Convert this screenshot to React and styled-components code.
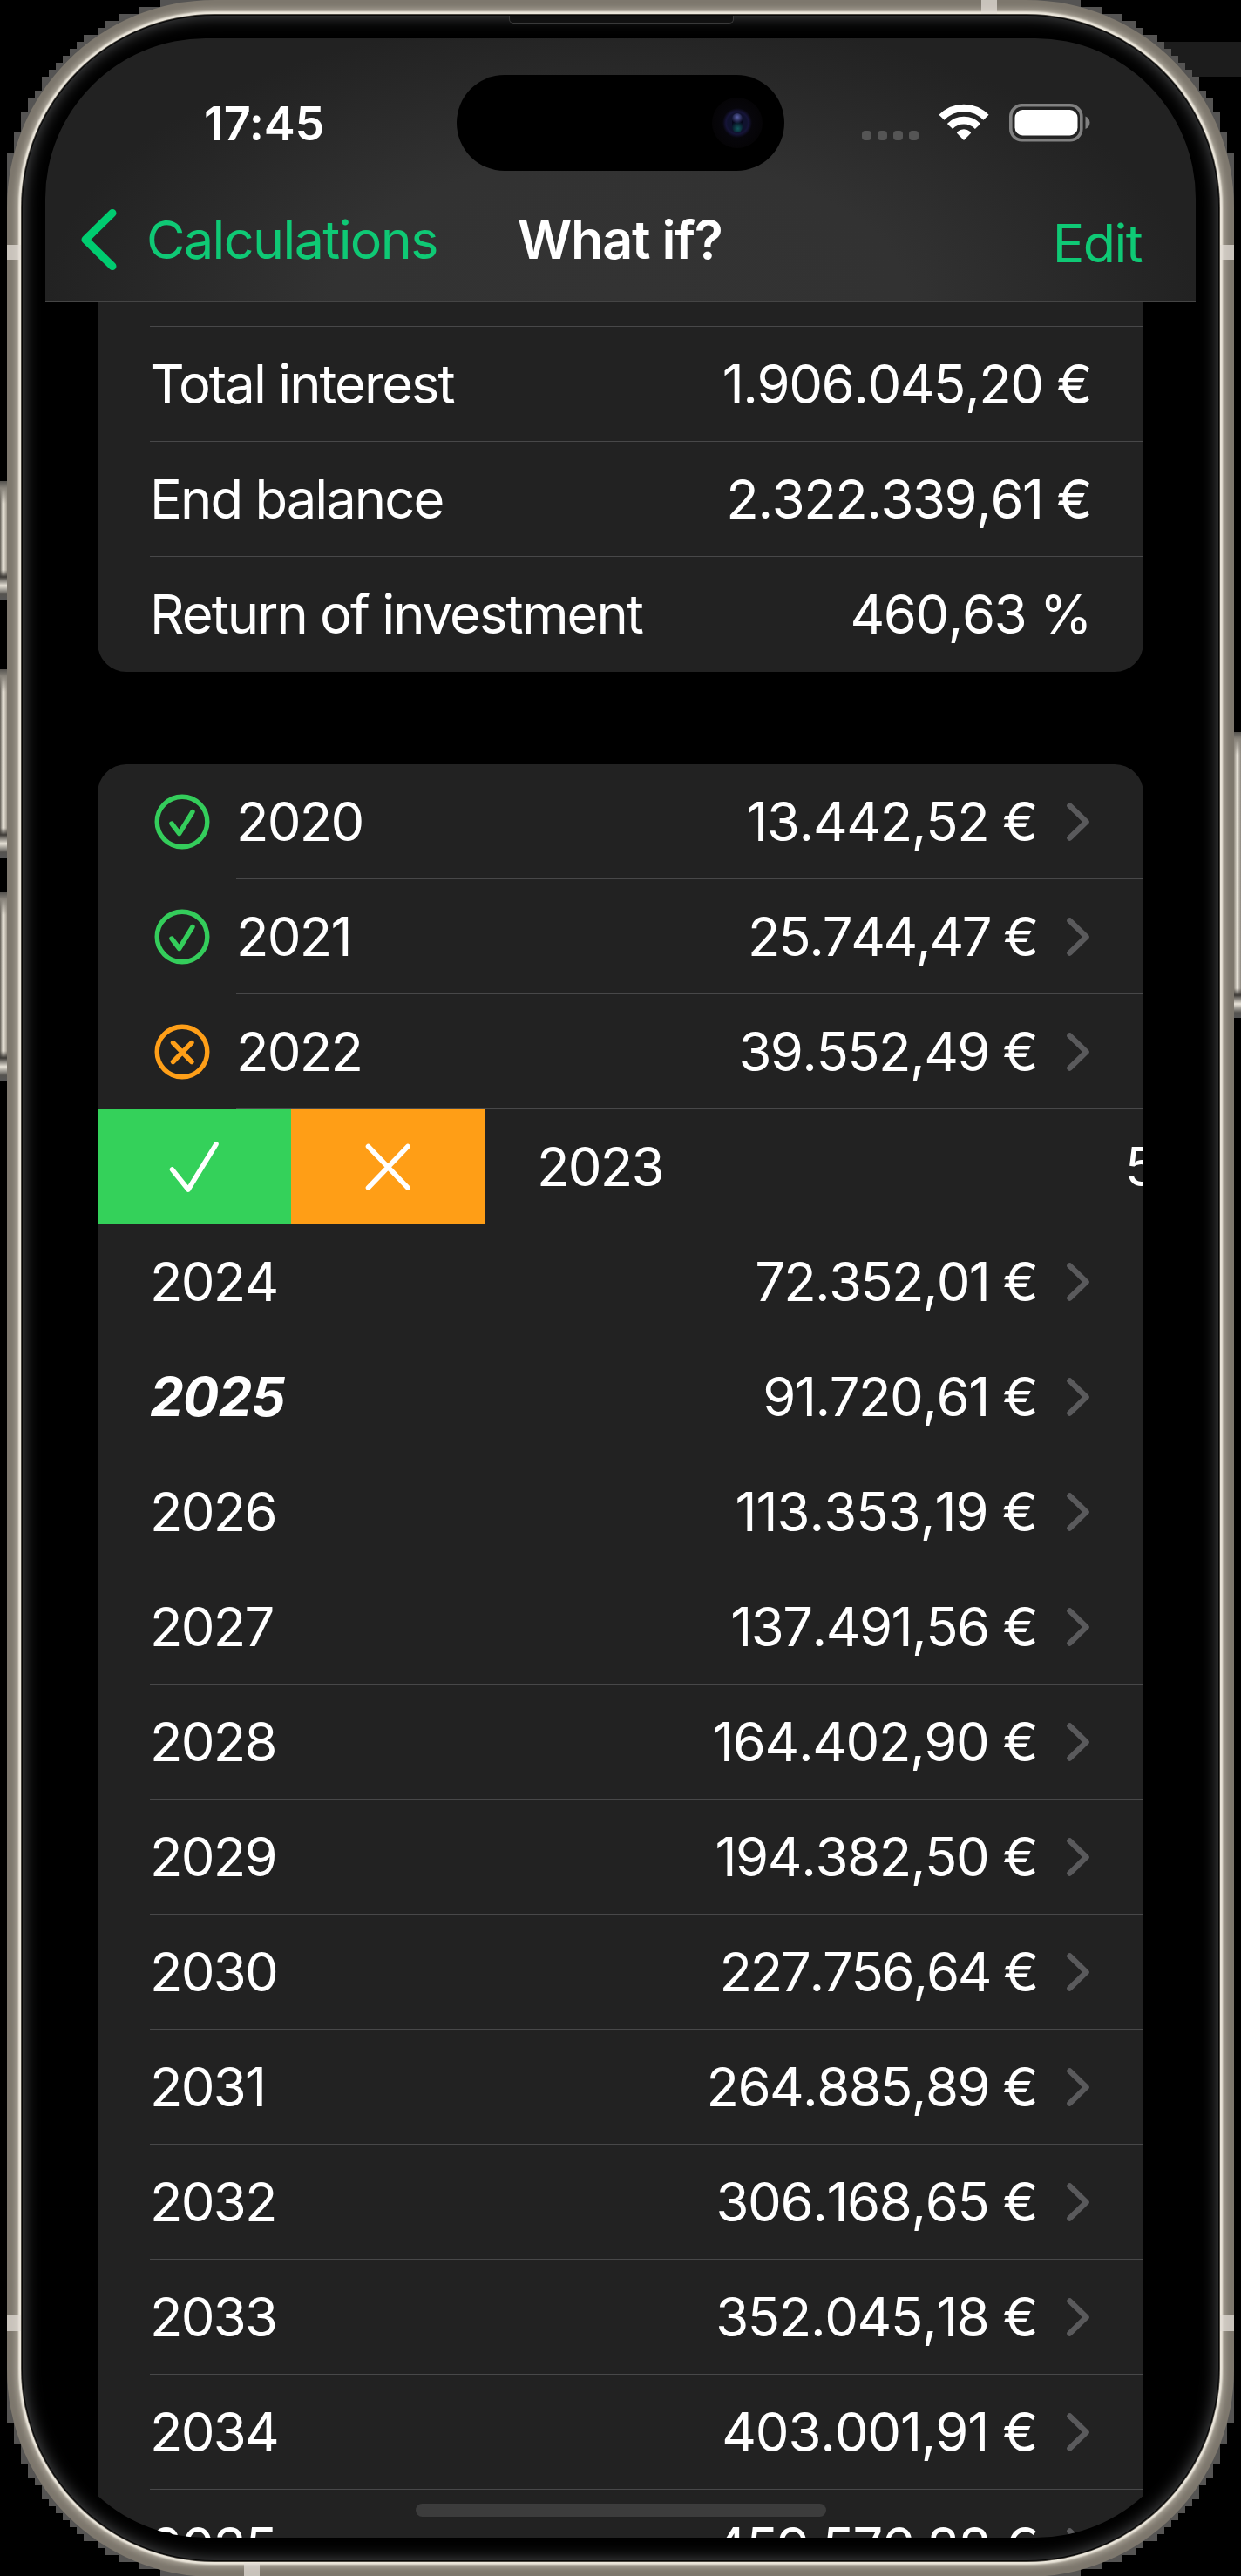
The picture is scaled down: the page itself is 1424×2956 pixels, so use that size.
import React from "react";
import styled, { createGlobalStyle, css } from "styled-components";

const Global = createGlobalStyle`
  html, body { margin: 0; padding: 0; background: #000; }
  * { box-sizing: border-box; }
`;

const Page = styled.main`
  position: relative;
  width: 1424px;
  height: 2956px;
  overflow: hidden;
  background: #000;
  font-family: Inter, "Liberation Sans", sans-serif;
  color: #fff;
`;

const Strip = styled.div`
  position: absolute;
  top: 48px;
  right: 0;
  width: 110px;
  height: 40px;
  background: #1c1c1c;
`;

const Edge = styled.svg`
  position: absolute;
  inset: 0;
  width: 1424px;
  height: 2956px;
`;

const SideButton = styled.span`
  position: absolute;
  width: 8px;
  background: linear-gradient(
      180deg,
      #55534f 0,
      #8a857c 8px,
      transparent 26px,
      transparent calc(100% - 34px),
      #3d3a36 calc(100% - 26px),
      #e8e3d8 calc(100% - 16px),
      #55534f calc(100% - 6px),
      #555 100%
    ),
    ${(p) =>
      p.$right
        ? "linear-gradient(90deg, #8f897e, #e6e1d7 45%, #8a857c)"
        : "linear-gradient(90deg, #5d5850, #f1ece1 45%, #a39c90)"};
  ${(p) => (p.$right ? "right: 0;" : "left: 0;")}
  top: ${(p) => p.$top}px;
  height: ${(p) => p.$height}px;
`;

const Frame = styled.div`
  position: relative;
  margin: 0 8px;
  height: 2957px;
  padding: 17px;
  border-radius: 238px;
  background: #7d776d;
  overflow: hidden;
`;

const Band = styled.span`
  position: absolute;
  background: rgba(226, 220, 214, 0.75);
  left: ${(p) => p.$x}px;
  top: ${(p) => p.$y}px;
  width: ${(p) => p.$w}px;
  height: ${(p) => p.$h}px;
`;

const Bezel = styled.div`
  position: relative;
  height: 2922px;
  padding: 27px;
  border-radius: 221px;
  background: #000;
  box-shadow: inset 0 0 0 1px #050505, inset 0 0 20px #5a5b5d,
    0 0 0 1px #4b4740, 0 0 2px 4px #ece7dc, 0 0 6px 7px #aaa498;
`;

const Speaker = styled.span`
  position: absolute;
  top: 1px;
  left: 559px;
  width: 258px;
  height: 9px;
  background: #111;
  border: 1px solid #3a3a3a;
  border-top: 0;
  border-radius: 0 0 5px 5px;
`;

const Screen = styled.div`
  position: relative;
  display: flex;
  flex-direction: column;
  width: 1320px;
  height: 2868px;
  border-radius: 184px;
  overflow: hidden;
  background: #000;
`;

const Header = styled.header`
  flex: none;
  height: 302px;
  border-bottom: 1px solid #454545;
  background: radial-gradient(
    ellipse 660px 330px at 50% 100%,
    #333 0%,
    #323232 50%,
    #222 100%
  );
  display: flex;
  flex-direction: column;
`;

const StatusBar = styled.div`
  height: 194px;
  padding: 42px 120px 0 182px;
  display: grid;
  grid-template-columns: 290px 376px 1fr;
`;

const Clock = styled.time`
  padding-top: 20px;
  font-size: 54px;
  line-height: 72px;
  font-weight: 600;
  letter-spacing: -0.2px;
`;

const Island = styled.div`
  width: 376px;
  height: 110px;
  border-radius: 55px;
  background: #000;
  display: flex;
  justify-content: flex-end;
  align-items: center;
  padding-right: 25px;
`;

const Camera = styled.span`
  width: 58px;
  height: 58px;
  border-radius: 50%;
  background: radial-gradient(circle, #10122e 0 11px, #161438 13px, #07060b 17px, #050406 29px);
  display: grid;
  place-items: center;

  &::after {
    content: "";
    width: 12px;
    height: 22px;
    border-radius: 6px;
    background: radial-gradient(circle at 50% 20%, #5a61a8, transparent 40%),
      radial-gradient(circle at 55% 80%, #12595c, transparent 45%), #06071c;
  }
`;

const Indicators = styled.div`
  display: flex;
  justify-content: flex-end;
  align-items: flex-start;
  padding-top: 33px;
`;

const NavBar = styled.nav`
  height: 74px;
  display: flex;
  align-items: center;
  padding: 0 62px 0 40px;
  font-size: 61px;
  line-height: 74px;
`;

const Back = styled.a`
  display: flex;
  align-items: center;
  width: 502px;
  color: #0fc975;
  letter-spacing: -1.6px;

  svg {
    flex: none;
    margin-right: 32px;
  }
`;

const Title = styled.h1`
  margin: 0;
  font-size: 61px;
  line-height: 74px;
  font-weight: 600;
  letter-spacing: -1.2px;
  flex: 1;
`;

const Edit = styled.a`
  color: #0fc975;
  padding-top: 8px;
  letter-spacing: -1.6px;
`;

const List = styled.div`
  flex: 1;
  min-height: 0;
  overflow: hidden;
  padding: 0 60px;
  display: flex;
  flex-direction: column;
  gap: 106px;
`;

const Card = styled.section`
  flex: none;
  overflow: hidden;
  background: #222;
  border-radius: ${(p) => (p.$continued ? "0 0 33px 33px" : "33px")};
`;

const Row = styled.div`
  position: relative;
  height: ${(p) => (p.$stub ? 29 : 132)}px;
  display: flex;
  align-items: center;
  padding: 0 60px;
  font-size: 61.5px;
  line-height: 80px;
  white-space: nowrap;

  ${(p) =>
    !p.$last &&
    css`
      &::after {
        content: "";
        position: absolute;
        left: ${p.$inset || 60}px;
        right: 0;
        bottom: 0;
        height: 1px;
        background: rgba(110, 110, 112, 0.5);
      }
    `}
`;

const Label = styled.span`
  flex: 1;
  letter-spacing: -1.95px;
`;

const Year = styled(Label)`
  font-kerning: none;
  letter-spacing: -1.8px;
  ${(p) =>
    p.$current &&
    css`
      letter-spacing: -0.9px;
      font-weight: 700;
      font-style: italic;
    `}
`;

/* Narrow ones get a little more air, open sevens a little less. */
const tracking = (value) => {
  const ones = value.split("1").length - 1;
  const sevens = value.split("7").length - 1;
  return -1.9 + (3.5 + 2.5 * ones - 4 * sevens) / value.length;
};

const Amount = styled.span`
  letter-spacing: ${(p) => tracking(p.children).toFixed(2)}px;
  font-kerning: none;
`;

const StatusIcon = styled.svg`
  width: 64px;
  height: 64px;
  margin: 0 30px 0 5px;
  fill: none;
  stroke: ${(p) => p.$color};
  stroke-width: 5.4;
  stroke-linecap: round;
  stroke-linejoin: round;
`;

const Disclosure = styled.svg`
  width: 30px;
  height: 50px;
  margin-left: 32px;
  fill: none;
  stroke: #5a5a5c;
  stroke-width: 6.6;
  stroke-linecap: round;
  stroke-linejoin: round;
`;

const SwipedRow = styled(Row)`
  padding: 0;
`;

const Action = styled.button`
  flex: none;
  width: 222px;
  height: 132px;
  border: 0;
  padding: 0;
  background: ${(p) => p.$color};
  display: grid;
  place-items: center;

  svg {
    fill: none;
    stroke: #fff;
    stroke-width: 5.6;
    stroke-linecap: round;
    stroke-linejoin: round;
  }
`;

const Shifted = styled.div`
  flex: none;
  width: 1200px;
  display: flex;
  align-items: center;
  padding: 0 60px;
`;

const HomeIndicator = styled.span`
  position: absolute;
  left: 425px;
  bottom: 24px;
  width: 471px;
  height: 15px;
  border-radius: 8px;
  background: #3c3c3c;
`;

const summary = [
  ["Total interest", "1.906.045,20 €"],
  ["End balance", "2.322.339,61 €"],
  ["Return of investment", "460,63 %"],
];

const years = [
  { year: "2020", amount: "13.442,52 €", status: "ok" },
  { year: "2021", amount: "25.744,47 €", status: "ok" },
  { year: "2022", amount: "39.552,49 €", status: "miss" },
  { year: "2023", amount: "54.952,08 €", swiped: true },
  { year: "2024", amount: "72.352,01 €" },
  { year: "2025", amount: "91.720,61 €", current: true },
  { year: "2026", amount: "113.353,19 €" },
  { year: "2027", amount: "137.491,56 €" },
  { year: "2028", amount: "164.402,90 €" },
  { year: "2029", amount: "194.382,50 €" },
  { year: "2030", amount: "227.756,64 €" },
  { year: "2031", amount: "264.885,89 €" },
  { year: "2032", amount: "306.168,65 €" },
  { year: "2033", amount: "352.045,18 €" },
  { year: "2034", amount: "403.001,91 €" },
  { year: "2035", amount: "459.576,88 €" },
];

const R = 238;
const CELL = 8;

function cornerCells() {
  const cells = [];
  for (let gx = 0; gx < R / CELL; gx++) {
    for (let gy = 0; gy < R / CELL; gy++) {
      const near = Math.hypot(R - (gx + 1) * CELL, R - (gy + 1) * CELL);
      const far = Math.hypot(R - gx * CELL, R - gy * CELL);
      if (near < R && far > R) cells.push([gx * CELL, gy * CELL]);
    }
  }
  return cells;
}

const CELLS = cornerCells();

const EdgeBlocks = () => (
  <Edge viewBox="0 0 1424 2956" fill="#555453" shapeRendering="crispEdges">
    {CELLS.map(([x, y]) => (
      <g key={`${x}-${y}`}>
        <rect x={8 + x} y={y} width={CELL} height={CELL} />
        <rect x={1416 - CELL - x} y={y} width={CELL} height={CELL} />
        <rect x={8 + x} y={2956 - CELL - y} width={CELL} height={CELL} />
        <rect x={1416 - CELL - x} y={2956 - CELL - y} width={CELL} height={CELL} />
      </g>
    ))}
  </Edge>
);

const CheckCircle = () => (
  <StatusIcon viewBox="0 0 64 64" $color="#34cd5b">
    <circle cx="32" cy="32" r="28.8" />
    <path d="M20 34 L28.7 45.5 L44 20.5" />
  </StatusIcon>
);

const CrossCircle = () => (
  <StatusIcon viewBox="0 0 64 64" $color="#ff9f18">
    <circle cx="32" cy="32" r="28.8" />
    <path d="M21.5 21.5 L43 43.5 M43 21.5 L21.5 43.5" />
  </StatusIcon>
);

const Chevron = () => (
  <Disclosure viewBox="0 0 30 50">
    <path d="M5.5 6.5 L24.5 25 L5.5 43.5" />
  </Disclosure>
);

const StatusGlyph = styled.svg`
  flex: none;
  margin-left: ${(p) => p.$gap || 0}px;
`;

const Signal = () => (
  <StatusGlyph width="66" height="48" viewBox="0 0 66 48" fill="#555">
    {[0, 18, 36, 54].map((x) => (
      <rect key={x} x={x} y="31" width="11" height="11" rx="4" />
    ))}
  </StatusGlyph>
);

const Wifi = () => (
  <StatusGlyph $gap={22} width="58" height="48" viewBox="0 0 58 48">
    <g fill="none" stroke="#fff" strokeWidth="8.6">
      <path d="M3.5 15.8 A35.5 35.5 0 0 1 54.5 15.8" />
      <path d="M13 26 A22 22 0 0 1 45 26" />
    </g>
    <path
      d="M29 42 L21.2 34 Q20.4 33 21.4 32.2 Q29 26.4 36.6 32.2 Q37.6 33 36.8 34 Z"
      fill="#fff"
    />
  </StatusGlyph>
);

const Battery = () => (
  <StatusGlyph $gap={23} width="94" height="46" viewBox="0 0 94 46">
    <rect x="1.8" y="1.8" width="81" height="40" rx="13" fill="none" stroke="#808080" strokeWidth="3.6" />
    <rect x="6.5" y="7" width="72" height="29.4" rx="9" fill="#fff" />
    <path d="M87.5 14.5 Q92.5 16.5 92.5 21.8 Q92.5 27 87.5 29 Z" fill="#808080" />
  </StatusGlyph>
);

function YearRow({ item, last }) {
  if (item.swiped) {
    return (
      <SwipedRow>
        <Action $color="#34d15a" aria-label="Confirm">
          <svg width="64" height="64" viewBox="0 0 64 64">
            <path d="M6.5 35 L25 58 L57 6" />
          </svg>
        </Action>
        <Action $color="#ff9e16" aria-label="Dismiss">
          <svg width="64" height="64" viewBox="0 0 64 64">
            <path d="M9.5 8.5 L55 56 M55 8.5 L9.5 56" />
          </svg>
        </Action>
        <Shifted>
          <Year>{item.year}</Year>
          <Amount>{item.amount}</Amount>
          <Chevron />
        </Shifted>
      </SwipedRow>
    );
  }
  return (
    <Row $inset={item.status ? 159 : 60} $last={last}>
      {item.status === "ok" && <CheckCircle />}
      {item.status === "miss" && <CrossCircle />}
      <Year $current={item.current}>{item.year}</Year>
      <Amount>{item.amount}</Amount>
      <Chevron />
    </Row>
  );
}

export default function App() {
  return (
    <Page>
      <Global />
      <Strip />
      <EdgeBlocks />
      <SideButton $top={552} $height={136} />
      <SideButton $top={768} $height={216} />
      <SideButton $top={1024} $height={216} />
      <SideButton $right $top={840} $height={328} />
      <Frame>
        <Bezel>
          <Speaker />
          <Screen>
            <Header>
              <StatusBar>
                <Clock>17:45</Clock>
                <Island>
                  <Camera />
                </Island>
                <Indicators>
                  <Signal />
                  <Wifi />
                  <Battery />
                </Indicators>
              </StatusBar>
              <NavBar>
                <Back>
                  <svg width="44" height="72" viewBox="0 0 44 72" fill="none" stroke="#00cc70" strokeWidth="9" strokeLinecap="round" strokeLinejoin="round">
                    <path d="M37 5.5 L6 36 L37 66.5" />
                  </svg>
                  Calculations
                </Back>
                <Title>What if?</Title>
                <Edit>Edit</Edit>
              </NavBar>
            </Header>
            <List>
              <Card $continued>
                <Row $stub />
                {summary.map(([label, value], i) => (
                  <Row key={label} $last={i === summary.length - 1}>
                    <Label>{label}</Label>
                    <Amount>{value}</Amount>
                  </Row>
                ))}
              </Card>
              <Card>
                {years.map((item, i) => (
                  <YearRow key={item.year} item={item} last={i === years.length - 1} />
                ))}
              </Card>
            </List>
            <HomeIndicator />
          </Screen>
        </Bezel>
        <Band $x={1118} $y={0} $w={18} $h={16} />
        <Band $x={0} $y={281} $w={16} $h={17} />
        <Band $x={1392} $y={281} $w={16} $h={17} />
        <Band $x={0} $y={2657} $w={16} $h={18} />
        <Band $x={1392} $y={2657} $w={16} $h={18} />
        <Band $x={272} $y={2941} $w={18} $h={16} />
      </Frame>
    </Page>
  );
}
